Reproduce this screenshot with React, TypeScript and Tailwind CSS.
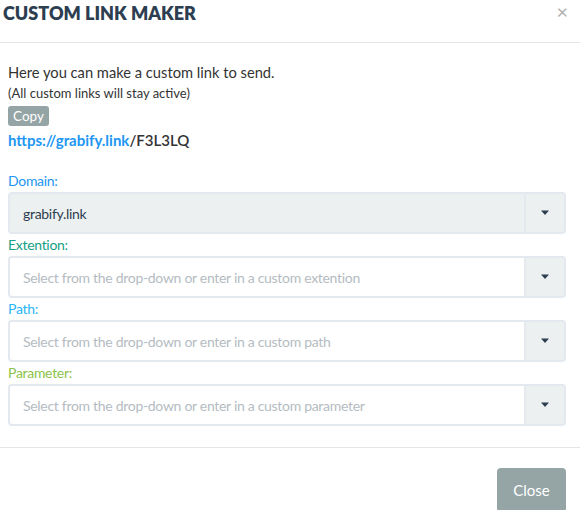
import React from "react";

const Caret = () => (
  <svg width="10" height="6" viewBox="0 0 10 6"><path d="M1 0.5 L9 0.5 L5 5 Z" fill="#2c3e50" /></svg>
);

function Field({ label, color, value, placeholder, filled }: { label: string; color: string; value?: string; placeholder?: string; filled?: boolean }) {
  return (
    <div>
      <div className={`text-[14px] leading-[22px] tracking-[-0.3px] ${color}`}>{label}</div>
      <div className={`flex h-[42px] rounded-[4px] border-2 border-[#e3e9ef] ${filled ? "bg-[#ecf0f1]" : "bg-white"}`}>
        <div className={`flex flex-1 items-center pl-[13px] text-[14px] tracking-[-0.3px] ${filled ? "text-[#2c3e50]" : "text-[#b4bcc2]"}`}>
          {value ?? placeholder}
        </div>
        <div className="flex w-[40px] items-center justify-center border-l-2 border-[#e3e9ef] bg-[#ecf0f1]">
          <Caret />
        </div>
      </div>
    </div>
  );
}

export default function App() {
  return (
    <div className="h-[510px] w-[580px] overflow-hidden bg-white font-['Lato','Noto_Sans',sans-serif] text-[#2c3e50]">
      <div className="flex h-[43px] items-start justify-between border-b border-[#e5e5e5] pl-[3px] pr-[12px]">
        <div className="mt-[1px] text-[18px] font-extrabold leading-[24px] tracking-[0px]">CUSTOM LINK MAKER</div>
        <div className="mt-[1px] text-[20px] leading-[20px] text-[#b0b0b0]">×</div>
      </div>
      <div className="pl-[8px] pr-[14px] pt-[19px]">
        <div className="text-[14.7px] leading-[21px] text-[#333]">Here you can make a custom link to send.</div>
        <div className="text-[13px] leading-[20px] text-[#333]">(All custom links will stay active)</div>
        <div className="mt-[3px] inline-block h-[20px] rounded-[3px] bg-[#95a5a6] px-[5px] text-[13.5px] leading-[20px] text-white">Copy</div>
        <div className="mt-[2px] text-[15px] font-bold leading-[22px]">
          <span className="text-[#2196f3]">https://grabify.link</span>
          <span className="font-semibold text-[#333]">/F3L3LQ</span>
        </div>
        <div className="mt-[19px] flex flex-col">
          <Field label="Domain:" color="text-[#2196f3]" value="grabify.link" filled />
          <Field label="Extention:" color="text-[#16a085]" placeholder="Select from the drop-down or enter in a custom extention" />
          <Field label="Path:" color="text-[#29b6f6]" placeholder="Select from the drop-down or enter in a custom path" />
          <Field label="Parameter:" color="text-[#8bc34a]" placeholder="Select from the drop-down or enter in a custom parameter" />
        </div>
      </div>
      <div className="mt-[21px] flex justify-end border-t border-[#e5e5e5] pr-[14px] pt-[20px]">
        <div className="flex h-[44px] w-[69px] items-center justify-center rounded-[4px] bg-[#95a5a6] text-[15px] text-white">Close</div>
      </div>
    </div>
  );
}
